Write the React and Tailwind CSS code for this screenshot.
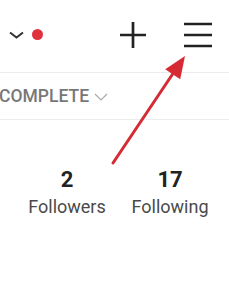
export default function App() {
  return (
    <div
      className="relative w-[229px] h-[300px] overflow-hidden bg-white"
      style={{ fontFamily: "Roboto, 'Liberation Sans', sans-serif" }}
    >
      {/* top bar */}
      <div className="flex h-[73px] items-center pb-[3px] border-b border-[#ececec]">
        <svg className="ml-[9px]" width="15" height="8" viewBox="0 0 15 8">
          <path d="M1 1.5 L7.5 6.5 L14 1.5" fill="none" stroke="#333" strokeWidth="2" />
        </svg>
        <div className="ml-[8px] h-[11px] w-[11px] rounded-full bg-[#e0313d]" />
        <svg className="ml-[76px]" width="28" height="28" viewBox="0 0 28 28">
          <path d="M14 1 V27 M1 14 H27" stroke="#222" strokeWidth="2.7" />
        </svg>
        <svg className="ml-[37px]" width="28" height="28" viewBox="0 0 28 28">
          <path d="M0 3 H28 M0 14 H28 M0 25 H28" stroke="#222" strokeWidth="2.5" />
        </svg>
      </div>

      {/* filter row */}
      <div className="flex h-[47px] items-center border-b border-[#ececec]">
        <span className="text-[17.5px] leading-[20px] font-medium text-[#777] -ml-[1px]">
          COMPLETE
        </span>
        <svg className="ml-[5px] mt-[1px]" width="14" height="8" viewBox="0 0 14 8">
          <path d="M1 1 L7 7 L13 1" fill="none" stroke="#aaa" strokeWidth="1.2" />
        </svg>
      </div>

      {/* stats */}
      <div className="flex pt-[48px]">
        <div className="ml-[17px] w-[100px] flex flex-col items-center">
          <span className="text-[22px] leading-[24px] font-bold text-[#222]">2</span>
          <span className="mt-[4px] text-[18px] leading-[22px] text-[#4a4a4a]">Followers</span>
        </div>
        <div className="ml-[3px] w-[100px] flex flex-col items-center">
          <span className="text-[22px] leading-[24px] font-bold text-[#222]">17</span>
          <span className="mt-[4px] text-[18px] leading-[22px] text-[#4a4a4a]">Following</span>
        </div>
      </div>

      {/* annotation arrow */}
      <svg
        className="absolute left-0 top-0 pointer-events-none"
        width="229"
        height="300"
        viewBox="0 0 229 300"
      >
        <line x1="113" y1="163" x2="174" y2="72" stroke="#d62a35" strokeWidth="3" strokeLinecap="round" />
        <polygon points="185,56 180.2,79.2 165.2,69.2" fill="#d62a35" />
      </svg>
    </div>
  );
}
